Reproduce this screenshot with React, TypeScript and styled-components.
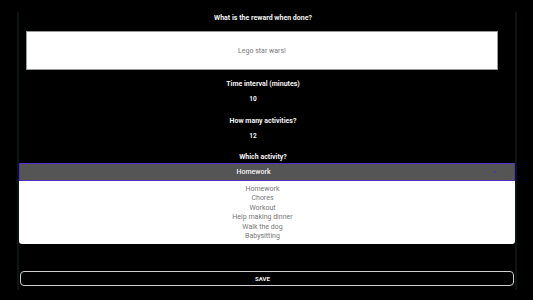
import styled, { createGlobalStyle } from "styled-components";

const activities = [
	"Homework",
	"Chores",
	"Workout",
	"Help making dinner",
	"Walk the dog",
	"Babysitting",
];

const GlobalStyle = createGlobalStyle`
	html, body {
		margin: 0;
		padding: 0;
		background: #000;
		font-family: Roboto, "Liberation Sans", sans-serif;
	}
`;

const App = () => {
	return (
		<Page>
			<GlobalStyle />
			<Panel>
				<Label>What is the reward when done?</Label>
				<RewardBox>Lego star wars!</RewardBox>
				<Label $top={8}>Time interval (minutes)</Label>
				<NumberValue>10</NumberValue>
				<Label $top={10}>How many activities?</Label>
				<NumberValue>12</NumberValue>
				<Label $top={9}>Which activity?</Label>
				<SelectBox>
					<SelectText>Homework</SelectText>
					<Arrow />
				</SelectBox>
				<OptionList>
					{activities.map((a) => (
						<Option key={a}>{a}</Option>
					))}
				</OptionList>
				<SaveButton>SAVE</SaveButton>
			</Panel>
		</Page>
	);
};

const Page = styled.div`
	width: 533px;
	height: 300px;
	padding-top: 12px;
	box-sizing: border-box;
	overflow: hidden;
`;

const Panel = styled.div`
	margin-left: 17px;
	width: 500px;
	height: 278px;
	box-sizing: border-box;
	border-left: 2px solid #0c1515;
	border-right: 2px solid #0c1515;
	display: flex;
	flex-direction: column;
	align-items: stretch;
`;

const Label = styled.div<{ $top?: number }>`
	margin-top: ${({ $top }) => $top ?? 0}px;
	padding-right: 8px;
	text-align: center;
	color: #f2f2f2;
	font-size: 7px;
	font-weight: 700;
	line-height: 12px;
`;

const RewardBox = styled.div`
	margin: 7px 17px 0 7px;
	height: 39px;
	box-sizing: border-box;
	background: #fff;
	border: 1px solid #9a9a9a;
	display: flex;
	align-items: center;
	justify-content: center;
	color: #7a7a7a;
	font-size: 7px;
`;

const NumberValue = styled.div`
	margin-top: 3px;
	text-align: center;
	padding-right: 28px;
	color: #f2f2f2;
	font-size: 6.5px;
	font-weight: 700;
	line-height: 12px;
`;

const SelectBox = styled.div`
	position: relative;
	height: 18px;
	box-sizing: border-box;
	background: #555555;
	border: 1px solid #5330c4;
	display: flex;
	align-items: center;
	justify-content: center;
	padding-right: 27px;
`;

const SelectText = styled.span`
	color: #f4f4f4;
	font-size: 7px;
	font-weight: 500;
`;

const Arrow = styled.span`
	position: absolute;
	right: 17px;
	top: 7px;
	width: 0;
	height: 0;
	border-left: 2px solid transparent;
	border-right: 2px solid transparent;
	border-top: 2px solid #5330c4;
`;

const OptionList = styled.div`
	background: #fff;
	border-radius: 0 0 3px 3px;
	padding: 4px 9px 3px 0;
	display: flex;
	flex-direction: column;
	align-items: center;
`;

const Option = styled.div`
	color: #777;
	font-size: 7px;
	line-height: 9.4px;
`;

const SaveButton = styled.button`
	margin: 27px 1px 0;
	height: 15px;
	box-sizing: border-box;
	background: #000;
	border: 1px solid #cfcfcf;
	border-radius: 4px;
	color: #f2f2f2;
	font-family: Roboto, "Liberation Sans", sans-serif;
	font-size: 6px;
	font-weight: 700;
	padding: 0 9px 0 0;
`;

export default App;
